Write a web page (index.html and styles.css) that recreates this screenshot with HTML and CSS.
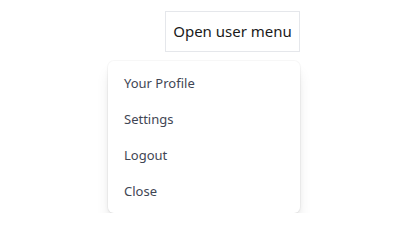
FILE: index.html
```html
<!DOCTYPE html>
<html>
<head>
<meta charset="utf-8">
<link rel="stylesheet" href="styles.css">
</head>
<body>
<div class="page">
  <div class="dropdown">
    <button class="trigger">Open user menu</button>
    <nav class="menu">
      <a class="item" href="#">Your Profile</a>
      <a class="item" href="#">Settings</a>
      <a class="item" href="#">Logout</a>
      <a class="item" href="#">Close</a>
    </nav>
  </div>
</div>
</body>
</html>
```
FILE: styles.css
```css
html, body {
  margin: 0;
  padding: 0;
  background: #fff;
}
body {
  font-family: "Noto Sans", "Open Sans", sans-serif;
}
.page {
  padding: 11px 0 0 108px;
}
.dropdown {
  display: flex;
  flex-direction: column;
  align-items: flex-end;
  width: 192px;
}
.trigger {
  box-sizing: border-box;
  font-family: inherit;
  font-size: 15px;
  line-height: 23px;
  color: #1a1a1a;
  background: #fff;
  border: 1px solid #e5e7eb;
  padding: 8px 0;
  margin: 0;
  width: 135px;
  height: 41px;
  white-space: nowrap;
  text-align: center;
}
.menu {
  box-sizing: border-box;
  margin-top: 9px;
  width: 192px;
  padding: 4px 0;
  background: #fff;
  border-radius: 6px;
  box-shadow: 0 10px 15px -3px rgba(0,0,0,0.12), 0 4px 6px -2px rgba(0,0,0,0.07), 0 0 0 1px rgba(0,0,0,0.03);
}
.item {
  display: block;
  padding: 8px 16px;
  font-size: 13px;
  line-height: 20px;
  color: #3f4654;
  text-decoration: none;
}
```
